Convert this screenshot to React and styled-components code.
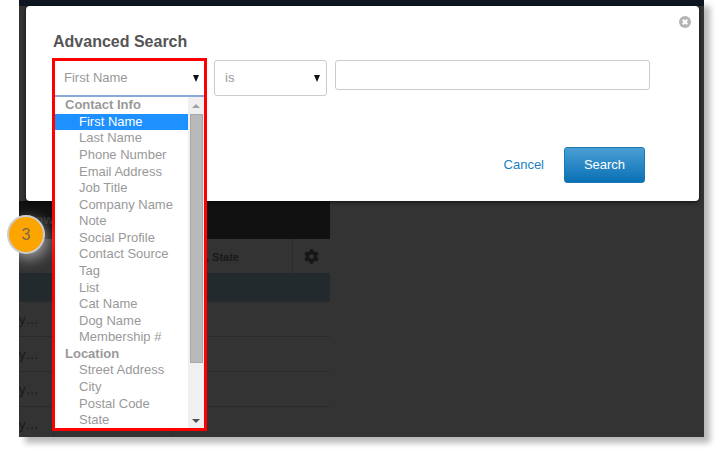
import styled, { createGlobalStyle } from "styled-components";
import { FaCog } from "react-icons/fa";

const GlobalStyle = createGlobalStyle`
  html, body {
    margin: 0;
    background: #fff;
    font-family: "Liberation Sans", Arial, sans-serif;
  }
`;

const Screen = styled.div`
  width: 719px;
  height: 452px;
  padding-left: 19px;
  box-sizing: border-box;
  overflow: hidden;
`;

const Shell = styled.div`
  position: relative;
  width: 685px;
  height: 437px;
  background: #333;
  box-shadow: 6px 6px 6px rgba(0, 0, 0, 0.28);
`;

const TopBar = styled.div`
  height: 6px;
  background: #0e1621;
`;

const LeftPanel = styled.div`
  width: 311px;
  height: 236px;
  margin-top: 195px;
  overflow: hidden;
`;

const DarkBand = styled.div`
  height: 38px;
  background: #111;
  color: #2b2b2b;
  font-size: 13px;
  font-weight: bold;
  line-height: 38px;
`;

const HeadRow = styled.div`
  display: flex;
  height: 34px;
  background: #333;
  color: #191919;
  font-size: 11px;
  font-weight: bold;
  line-height: 36px;
`;

const HeadCell = styled.div`
  width: ${(p) => p.$width}px;
  box-sizing: border-box;
  padding-left: 13px;
  white-space: nowrap;
`;

const GearCell = styled.div`
  flex: 1;
  display: flex;
  align-items: center;
  justify-content: center;
  border-left: 1px solid #2b2b2b;
  color: #161616;
  font-size: 15px;
`;

const TealRow = styled.div`
  height: 28px;
  background: #222a2e;
`;

const BodyRow = styled.div`
  display: flex;
  height: 35px;
  border-top: 1px solid #2a2a2a;
  box-sizing: border-box;
`;

const BodyCell = styled.div`
  width: ${(p) => p.$width}px;
  box-sizing: border-box;
  border-right: 1px solid #2c2c2c;
  color: #191919;
  font-size: 13px;
  line-height: 36px;
`;

const Modal = styled.div`
  position: absolute;
  top: 6px;
  left: 7px;
  width: 673px;
  height: 195px;
  box-sizing: border-box;
  padding: 28px 54px 18px 26px;
  display: flex;
  flex-direction: column;
  background: #fff;
  border-radius: 4px;
  box-shadow: 0 1px 4px rgba(0, 0, 0, 0.7);
`;

const CloseButton = styled.svg`
  position: absolute;
  top: 10px;
  right: 8px;
  width: 12px;
  height: 12px;
`;

const Title = styled.h2`
  margin: 0 0 9px 1px;
  height: 16px;
  color: #555;
  font-size: 16px;
  font-weight: bold;
  line-height: 16px;
`;

const FieldRow = styled.div`
  display: flex;
  align-items: flex-start;
  margin-top: 1px;
`;

const HighlightSlot = styled.div`
  position: relative;
  flex: 0 0 155px;
  height: 36px;
  margin-right: 7px;
`;

const HighlightFrame = styled.div`
  position: absolute;
  top: -2px;
  left: 0;
  width: 155px;
  height: 373px;
  box-sizing: border-box;
  border: 3px solid #f00;
  background: #fff;
  z-index: 2;
`;

const SelectBox = styled.div`
  position: relative;
  box-sizing: border-box;
  color: #999;
  font-size: 13px;
  background: #fff;

  &::after {
    content: "";
    position: absolute;
    right: ${(p) => p.$arrowRight}px;
    top: 50%;
    margin-top: -3px;
    border-left: 3px solid transparent;
    border-right: 3px solid transparent;
    border-top: 7px solid #111;
  }
`;

const OpenSelect = styled(SelectBox)`
  height: 36.2px;
  padding-left: 9px;
  line-height: 33px;
  border-bottom: 2px solid #8aa8d8;
`;

const ClosedSelect = styled(SelectBox)`
  flex: 0 0 113px;
  height: 36px;
  margin-right: 8px;
  padding-left: 10px;
  line-height: 33px;
  border: 1px solid #ccc;
  border-radius: 3px;
`;

const TextField = styled.div`
  flex: 0 0 315px;
  height: 30px;
  box-sizing: border-box;
  background: #fff;
  border: 1px solid #ccc;
  border-radius: 3px;
`;

const ListArea = styled.div`
  display: flex;
  height: 330.8px;
  overflow: hidden;
`;

const OptionList = styled.div`
  flex: 1;
  min-width: 0;
`;

const Option = styled.div`
  height: 16.58px;
  padding-left: ${(p) => (p.$group ? 10 : 24)}px;
  color: ${(p) => (p.$selected ? "#fff" : "#999")};
  background: ${(p) => (p.$selected ? "#1e90ff" : "transparent")};
  font-size: 13px;
  font-weight: ${(p) => (p.$group ? "bold" : "normal")};
  line-height: 16.58px;
  white-space: nowrap;
`;

const ScrollTrack = styled.div`
  flex: 0 0 16px;
  display: flex;
  flex-direction: column;
  align-items: center;
  background: #f0f0f0;
`;

const ScrollArrow = styled.div`
  flex: 0 0 17px;
  box-sizing: border-box;
  display: flex;
  align-items: center;
  justify-content: center;
  padding-top: ${(p) => (p.$down ? 3 : 0)}px;

  &::before {
    content: "";
    border-left: 4px solid transparent;
    border-right: 4px solid transparent;
    ${(p) => (p.$down ? "border-top: 4px solid #505050;" : "border-bottom: 4px solid #a3a3a3;")}
  }
`;

const ScrollThumb = styled.div`
  width: 13px;
  height: 249px;
  box-sizing: border-box;
  margin-bottom: auto;
  background: #b9b9b9;
  border: 1px solid #a8a8a8;
`;

const Footer = styled.div`
  display: flex;
  align-items: center;
  justify-content: flex-end;
  margin-top: auto;
`;

const CancelLink = styled.a`
  margin: 0 20px 2px 0;
  color: #1a7fc1;
  font-size: 13px;
`;

const SearchButton = styled.button`
  width: 81px;
  height: 36px;
  padding: 0 0 2px;
  color: #fff;
  background: linear-gradient(#4a9fd4, #0a70b5);
  border: 1px solid #1a78b5;
  border-radius: 3px;
  font-family: inherit;
  font-size: 13px;
`;

const StepBadge = styled.div`
  position: absolute;
  top: 215px;
  left: -12px;
  width: 38px;
  height: 39px;
  box-sizing: border-box;
  display: flex;
  align-items: center;
  justify-content: center;
  color: #7d6a4a;
  background: #fca500;
  border: 2px solid #ccc;
  border-radius: 50%;
  font-size: 16px;
  box-shadow: 3px 5px 14px rgba(255, 255, 255, 0.5);
  z-index: 3;
`;

const options = [
  { label: "Contact Info", group: true },
  { label: "First Name", selected: true },
  { label: "Last Name" },
  { label: "Phone Number" },
  { label: "Email Address" },
  { label: "Job Title" },
  { label: "Company Name" },
  { label: "Note" },
  { label: "Social Profile" },
  { label: "Contact Source" },
  { label: "Tag" },
  { label: "List" },
  { label: "Cat Name" },
  { label: "Dog Name" },
  { label: "Membership #" },
  { label: "Location", group: true },
  { label: "Street Address" },
  { label: "City" },
  { label: "Postal Code" },
  { label: "State" },
];

const rows = [0, 1, 2, 3];

export default function App() {
  return (
    <Screen>
      <GlobalStyle />
      <Shell>
        <TopBar />
        <LeftPanel>
          <DarkBand>Show</DarkBand>
          <HeadRow>
            <HeadCell $width={35} />
            <HeadCell $width={119} />
            <HeadCell $width={119}>City, State</HeadCell>
            <GearCell>
              <FaCog />
            </GearCell>
          </HeadRow>
          <TealRow />
          {rows.map((row) => (
            <BodyRow key={row}>
              <BodyCell $width={35}>y…</BodyCell>
              <BodyCell $width={119} />
            </BodyRow>
          ))}
        </LeftPanel>

        <Modal>
          <CloseButton viewBox="0 0 12 12">
            <circle cx="6" cy="6" r="6" fill="#b4b4b4" />
            <path d="M3.7 3.7l4.6 4.6M8.3 3.7L3.7 8.3" stroke="#fff" strokeWidth="2" />
          </CloseButton>
          <Title>Advanced Search</Title>
          <FieldRow>
            <HighlightSlot>
              <HighlightFrame>
                <OpenSelect $arrowRight={5}>First Name</OpenSelect>
                <ListArea>
                  <OptionList>
                    {options.map((option) => (
                      <Option
                        key={option.label}
                        $group={option.group}
                        $selected={option.selected}
                      >
                        {option.label}
                      </Option>
                    ))}
                  </OptionList>
                  <ScrollTrack>
                    <ScrollArrow />
                    <ScrollThumb />
                    <ScrollArrow $down />
                  </ScrollTrack>
                </ListArea>
              </HighlightFrame>
            </HighlightSlot>
            <ClosedSelect $arrowRight={6}>is</ClosedSelect>
            <TextField />
          </FieldRow>
          <Footer>
            <CancelLink>Cancel</CancelLink>
            <SearchButton>Search</SearchButton>
          </Footer>
        </Modal>

        <StepBadge>3</StepBadge>
      </Shell>
    </Screen>
  );
}
